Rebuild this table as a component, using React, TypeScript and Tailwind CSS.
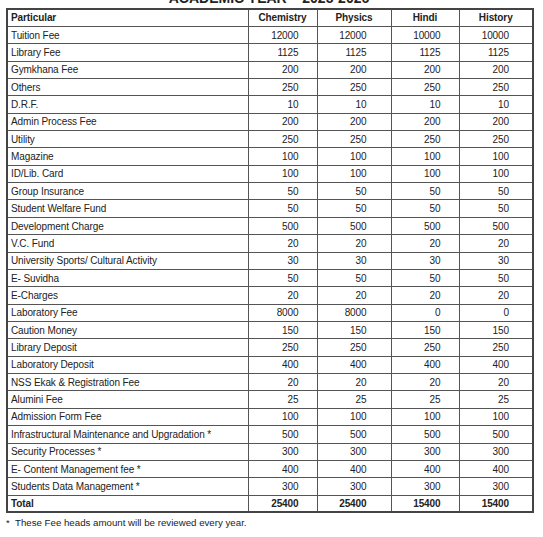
const rows: [string, number, number, number, number][] = [
  ["Tuition Fee", 12000, 12000, 10000, 10000],
  ["Library Fee", 1125, 1125, 1125, 1125],
  ["Gymkhana Fee", 200, 200, 200, 200],
  ["Others", 250, 250, 250, 250],
  ["D.R.F.", 10, 10, 10, 10],
  ["Admin Process Fee", 200, 200, 200, 200],
  ["Utility", 250, 250, 250, 250],
  ["Magazine", 100, 100, 100, 100],
  ["ID/Lib. Card", 100, 100, 100, 100],
  ["Group Insurance", 50, 50, 50, 50],
  ["Student Welfare Fund", 50, 50, 50, 50],
  ["Development Charge", 500, 500, 500, 500],
  ["V.C. Fund", 20, 20, 20, 20],
  ["University Sports/ Cultural Activity", 30, 30, 30, 30],
  ["E- Suvidha", 50, 50, 50, 50],
  ["E-Charges", 20, 20, 20, 20],
  ["Laboratory Fee", 8000, 8000, 0, 0],
  ["Caution Money", 150, 150, 150, 150],
  ["Library Deposit", 250, 250, 250, 250],
  ["Laboratory Deposit", 400, 400, 400, 400],
  ["NSS Ekak & Registration Fee", 20, 20, 20, 20],
  ["Alumini Fee", 25, 25, 25, 25],
  ["Admission Form Fee", 100, 100, 100, 100],
  ["Infrastructural Maintenance and Upgradation *", 500, 500, 500, 500],
  ["Security Processes *", 300, 300, 300, 300],
  ["E- Content Management fee *", 400, 400, 400, 400],
  ["Students Data Management *", 300, 300, 300, 300],
];

// right padding per fee column, taken from where the digits end
const pads = ["pr-[18px]", "pr-[24px]", "pr-[18px]", "pr-[23px]"];

export default function App() {
  return (
    <div className="w-[543px] h-[537px] overflow-hidden bg-white text-[#222] font-['Liberation_Sans',Arial,sans-serif]">
      <div className="w-[526px] ml-[6px] -mt-[12px] h-[20px] leading-[20px] text-center text-[14px] font-bold">
        ACADEMIC YEAR – 2025-2026
      </div>
      <table className="ml-[6px] w-[527px] table-fixed border-collapse border-2 border-[#444] text-[10px] leading-[13px] tracking-[-0.1px]">
        <colgroup>
          <col className="w-[241px]" />
          <col className="w-[69px]" />
          <col className="w-[74px]" />
          <col className="w-[68px]" />
          <col className="w-[74px]" />
        </colgroup>
        <thead>
          <tr className="h-[17.4px]">
            <th className="border border-[#555] pl-[3px] text-left font-bold">Particular</th>
            <th className="border border-[#555] text-center font-bold">Chemistry</th>
            <th className="border border-[#555] text-center font-bold">Physics</th>
            <th className="border border-[#555] text-center font-bold">Hindi</th>
            <th className="border border-[#555] text-center font-bold">History</th>
          </tr>
        </thead>
        <tbody>
          {rows.map((r) => (
            <tr key={r[0]} className="h-[17.36px]">
              <td className="border border-[#555] pl-[3px] whitespace-nowrap">{r[0]}</td>
              {r.slice(1).map((v, i) => (
                <td key={i} className={`border border-[#555] text-right ${pads[i]}`}>
                  {v}
                </td>
              ))}
            </tr>
          ))}
          <tr className="h-[17.36px] font-bold">
            <td className="border border-[#555] pl-[3px]">Total</td>
            <td className={`border border-[#555] text-right ${pads[0]}`}>25400</td>
            <td className={`border border-[#555] text-right ${pads[1]}`}>25400</td>
            <td className={`border border-[#555] text-right ${pads[2]}`}>15400</td>
            <td className={`border border-[#555] text-right ${pads[3]}`}>15400</td>
          </tr>
        </tbody>
      </table>
      <p className="ml-[6px] mt-[3px] text-[9.7px] leading-[14px]">
        *&nbsp; These Fee heads amount will be reviewed every year.
      </p>
    </div>
  );
}
